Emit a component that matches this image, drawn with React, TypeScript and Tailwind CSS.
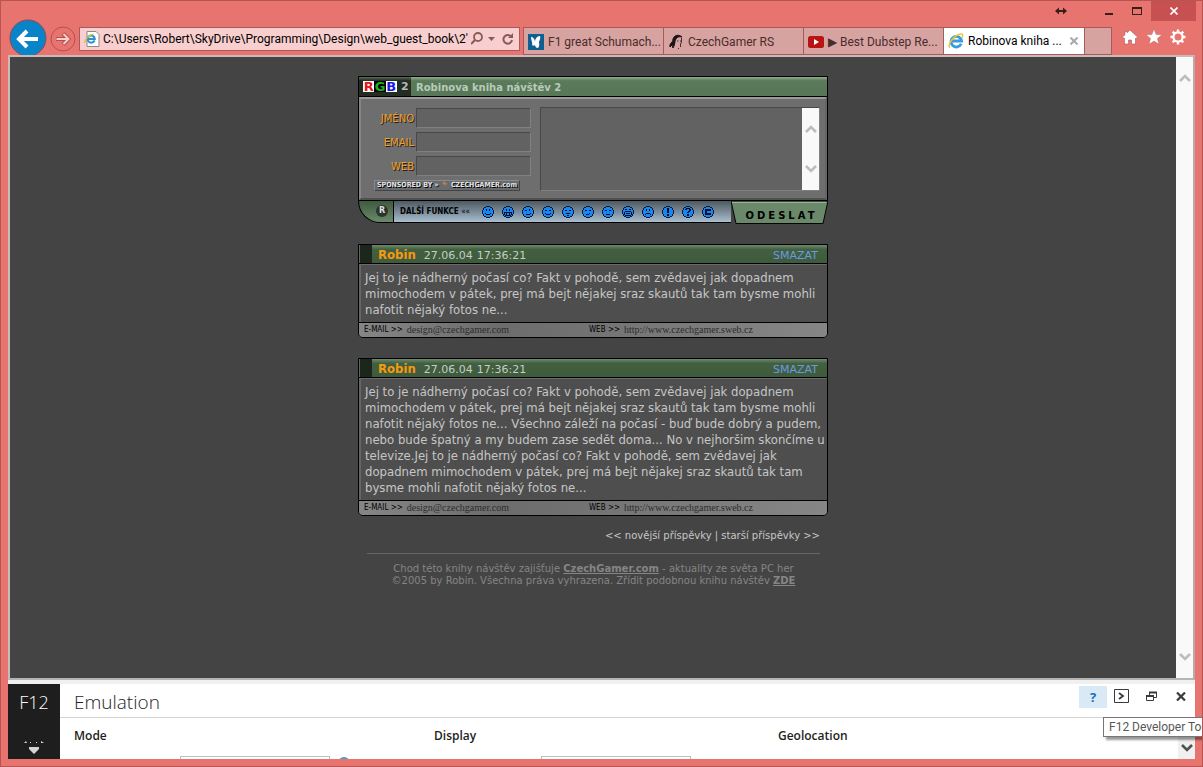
import type { ReactNode } from "react";

type Post = {
  id: number;
  author: string;
  date: string;
  time: string;
  lines: string[];
  email: string;
  web: string;
};

const posts: Post[] = [
  {
    id: 1,
    author: "Robin",
    date: "27.06.04",
    time: "17:36:21",
    lines: [
      "Jej to je nádherný počasí co? Fakt v pohodě, sem zvědavej jak dopadnem",
      "mimochodem v pátek, prej má bejt nějakej sraz skautů tak tam bysme mohli",
      "nafotit nějaký fotos ne...",
    ],
    email: "design@czechgamer.com",
    web: "http://www.czechgamer.sweb.cz",
  },
  {
    id: 2,
    author: "Robin",
    date: "27.06.04",
    time: "17:36:21",
    lines: [
      "Jej to je nádherný počasí co? Fakt v pohodě, sem zvědavej jak dopadnem",
      "mimochodem v pátek, prej má bejt nějakej sraz skautů tak tam bysme mohli",
      "nafotit nějaký fotos ne... Všechno záleží na počasí - buď bude dobrý a pudem,",
      "nebo bude špatný a my budem zase sedět doma... No v nejhoršim skončíme u",
      "televize.Jej to je nádherný počasí co? Fakt v pohodě, sem zvědavej jak",
      "dopadnem mimochodem v pátek, prej má bejt nějakej sraz skautů tak tam",
      "bysme mohli nafotit nějaký fotos ne...",
    ],
    email: "design@czechgamer.com",
    web: "http://www.czechgamer.sweb.cz",
  },
];

const fields = [
  { id: "jmeno", label: "JMÉNO" },
  { id: "email", label: "EMAIL" },
  { id: "web", label: "WEB" },
];

const eyes = "M4 3h1v2H4zM7 3h1v2H7z";

const smileys = [
  { name: "úsměv", d: `${eyes}M3 7h1v1H3zM8 7h1v1H8zM4 8h4v1H4z` },
  { name: "smích", d: `${eyes}M2 6h8v1H2zM2 7h1v2H2zM4 7h1v2H4zM7 7h1v2H7zM9 7h1v2H9zM3 9h6v1H3z` },
  { name: "mrknutí", d: "M3 4h2v1H3zM7 3h1v2H7zM8 7h1v1H8zM4 8h4v1H4z" },
  { name: "spokojený", d: "M3 4h2v1H3zM7 4h2v1H7zM3 7h1v1H3zM8 7h1v1H8zM4 8h4v1H4z" },
  { name: "údiv", d: "M3 4h2v1H3zM7 4h2v1H7zM4 7h4v1H4zM5 9h2v1H5z" },
  { name: "úšklebek", d: "M3 4h2v1H3zM7 4h2v1H7zM4 8h3v1H4zM7 7h1v1H7z" },
  { name: "vážný", d: "M3 4h2v1H3zM7 4h2v1H7zM4 8h4v1H4z" },
  { name: "křik", d: "M3 3h2v1H3zM7 3h2v1H7zM3 5h6v1H3zM2 6h1v3H2zM9 6h1v3H9zM4 7h4v1H4zM3 9h6v1H3z" },
  { name: "smutek", d: `${eyes}M4 7h4v1H4zM3 8h1v1H3zM8 8h1v1H8z` },
  { name: "vykřičník", d: "M5 2h2v5H5zM5 8h2v2H5z" },
  { name: "otazník", d: "M4 2h4v1H4zM3 3h2v1H3zM7 3h2v2H7zM6 5h2v1H6zM5 6h2v1H5zM5 8h2v2H5z" },
  { name: "copyright", d: "M3 3h6v2H5v2h4v2H3z" },
];

function Chevron({ up = false, className }: { up?: boolean; className: string }) {
  return (
    <svg viewBox="0 0 12 8" className={className} fill="none" stroke="currentColor" strokeWidth="2.6">
      <path d={up ? "M1 7l5-5 5 5" : "M1 1l5 5 5-5"} />
    </svg>
  );
}

function IeLogo({ className }: { className: string }) {
  return (
    <svg viewBox="0 0 16 16" className={className} fill="none">
      <path d="M13.2 10.8A5.3 5.3 0 1 1 13.6 8H4.5" stroke="#3a9ddb" strokeWidth="2.8" />
      <path d="M2 14.6C-1 12 5 3.5 11 1.4c3.5-1.2 4.3.6 3.2 3" stroke="#f1c232" strokeWidth="1.5" />
    </svg>
  );
}

function TitleBar() {
  return (
    <div className="flex h-5 shrink-0 justify-end text-[#3a1c1c]">
      <svg viewBox="0 0 12 8" className="mt-1.5 mr-7 h-2 w-3" fill="currentColor">
        <path d="M0 4l4-3.5v2.5h4V.5L12 4 8 7.5V5H4v2.5z" />
      </svg>
      <button aria-label="Minimalizovat" className="flex w-7 justify-center pt-3">
        <span className="h-0.5 w-2 bg-[#3a1c1c]" />
      </button>
      <button aria-label="Maximalizovat" className="flex w-7 justify-center pt-1.5">
        <span className="h-2 w-2.5 border border-t-2 border-[#3a1c1c]" />
      </button>
      <button aria-label="Zavřít" className="mr-1.5 flex w-[45px] items-center justify-center bg-[#c75050] text-white">
        <svg viewBox="0 0 8 8" className="h-2 w-2" stroke="currentColor" strokeWidth="1.6">
          <path d="M.5.5l7 7M7.5.5l-7 7" />
        </svg>
      </button>
    </div>
  );
}

function Tab({ icon, children }: { icon: ReactNode; children: ReactNode }) {
  return (
    <button className="flex h-7 w-[140px] items-center gap-1 border-r border-[#a85a5a] pl-1 text-left text-[#4a2b2b]">
      {icon}
      <span className="whitespace-nowrap">{children}</span>
    </button>
  );
}

function NavBar() {
  return (
    <div className="flex h-[34px] shrink-0 items-start font-['Roboto',sans-serif] text-[12px] leading-4">
      <button aria-label="Zpět" className="-mt-0.5 ml-2 shrink-0">
        <svg viewBox="0 0 38 38" className="h-[38px] w-[38px]" fill="none">
          <circle cx="19" cy="19" r="18" fill="#0a84c8" stroke="#8a4a55" />
          <path d="M29 20H11M18 12l-8 8 8 8" stroke="#fff" strokeWidth="4" />
        </svg>
      </button>
      <button aria-label="Vpřed" className="mt-1 ml-[3px] shrink-0">
        <svg viewBox="0 0 26 28" className="h-7 w-[26px]" fill="none">
          <circle cx="13" cy="14" r="12" stroke="#b94f4d" />
          <path d="M6 14h12M13 8.5l5.5 5.5-5.5 5.5" stroke="#b94f4d" strokeWidth="4" />
          <path d="M6.5 14h11M13.5 9l5 5-5 5" stroke="#f6cfcd" strokeWidth="2" />
        </svg>
      </button>
      <div className="mt-1.5 ml-[3px] flex h-6 min-w-0 flex-1 items-center border border-[#a85a5a] bg-[#f8cfce] pl-1">
        <svg viewBox="0 0 16 16" className="h-4 w-4 shrink-0" fill="none">
          <path d="M3 .5h9l3 3v12H3z" fill="#fff" stroke="#8a8a8a" />
          <path d="M10.5 9.5A3.6 3.6 0 1 1 10.8 8H4" stroke="#2f8fd0" strokeWidth="2" />
          <path d="M1 12C0 9.5 5 4 9.5 3.2" stroke="#d9c22e" strokeWidth="1.2" />
        </svg>
        <input
          aria-label="Adresa"
          defaultValue={"C:\\Users\\Robert\\SkyDrive\\Programming\\Design\\web_guest_book\\2'"}
          className="ml-[3px] min-w-0 flex-1 bg-transparent text-black outline-none"
        />
        <svg viewBox="3 0 44 14" className="mr-1 h-3.5 w-11 shrink-0 text-[#8a5a5a]" fill="none" stroke="currentColor">
          <circle cx="10" cy="5" r="4" strokeWidth="1.8" />
          <path d="M7 8l-4 4" strokeWidth="2.2" />
          <path d="M20 5h7l-3.5 4z" fill="currentColor" stroke="none" />
          <path d="M43 4.5A4.3 4.3 0 1 0 44 8" strokeWidth="2" />
          <path d="M45 1v5h-5z" fill="currentColor" stroke="none" />
        </svg>
      </div>
      <div className="mt-1.5 ml-[3px] flex h-7 border border-r-0 border-[#a85a5a] bg-[#d6a3a1]">
        <Tab
          icon={
            <svg viewBox="0 0 16 16" className="h-4 w-4 shrink-0">
              <path d="M0 0h16v16H0z" fill="#0f5f93" />
              <path d="M3 3c2 0 4 2 4 5 0-3 2-6 5-6 1 3-1 5-1 6s1 4-1 6c-2 0-3-2-3-3-1 1-2 1-3 0 1-2-1-5-1-8z" fill="#fff" />
            </svg>
          }
        >
          F1 great Schumach...
        </Tab>
        <Tab
          icon={
            <svg viewBox="0 0 16 16" className="h-4 w-4 shrink-0" fill="none" stroke="#1c1313">
              <path d="M2 13c-1-4 3-4 3-8 1-4 6-5 9-2-4-1-6 1-7 4 0 3-1 5-2 7-1-1 0-3 0-4-1 1-2 2-3 3z" fill="#1c1313" />
              <path d="M13.5 4v4l-1 2v3M9 7h1.5M12 7h1M10 14l1 1" strokeWidth=".8" />
            </svg>
          }
        >
          CzechGamer RS
        </Tab>
        <Tab
          icon={
            <svg viewBox="0 0 16 16" className="h-4 w-4 shrink-0">
              <rect y="2" width="16" height="12" rx="2.5" fill="#b81414" />
              <path d="M6 5l5 3-5 3z" fill="#fff" />
            </svg>
          }
        >
          ▶ Best Dubstep Re...
        </Tab>
        <div className="flex w-[141px] items-center border-r border-[#a85a5a] bg-white pl-1 text-black">
          <IeLogo className="h-4 w-4 shrink-0" />
          <span className="ml-1 flex-1 whitespace-nowrap">Robinova kniha ...</span>
          <button aria-label="Zavřít kartu" className="mr-1.5 shrink-0 text-[#a8a8a8]">
            <svg viewBox="0 0 8 8" className="h-2 w-2" stroke="currentColor" strokeWidth="2">
              <path d="M.5.5l7 7M7.5.5l-7 7" />
            </svg>
          </button>
        </div>
        <button aria-label="Nová karta" className="w-[27px] border-r border-[#a85a5a]" />
      </div>
      <div className="mt-2 mr-4 ml-2.5 flex shrink-0 gap-2 text-white">
        <button aria-label="Domů">
          <svg viewBox="0 0 16 16" className="h-4 w-4" fill="currentColor" stroke="#a85a5a" strokeWidth=".6">
            <path d="M8 1l7.5 7-1.5 1.5-.5-.5v6H9.5v-4h-3v4H2.5V9l-.5.5L.5 8 3 5.7V2.5h2v1.3z" />
          </svg>
        </button>
        <button aria-label="Oblíbené">
          <svg viewBox="0 0 16 16" className="h-4 w-4" fill="currentColor" stroke="#a85a5a" strokeWidth=".4">
            <path d="M8 0l2.100 5.600 5.900.2-4.600 3.700 1.600 5.800L8 12l-5 3.300 1.600-5.800L0 5.800l5.900-.2z" />
          </svg>
        </button>
        <button aria-label="Nástroje">
          <svg viewBox="0 0 16 16" className="h-4 w-4" fill="none" stroke="currentColor">
            <circle cx="8" cy="8" r="4.6" strokeWidth="2.2" />
            <path d="M8 .5v2.5M8 13v2.5M.5 8H3M13 8h2.5M2.7 2.7l1.8 1.8M11.5 11.5l1.8 1.8M2.7 13.3l1.8-1.8M11.5 4.5l1.8-1.8" strokeWidth="2.4" />
          </svg>
        </button>
      </div>
    </div>
  );
}

function GuestForm() {
  return (
    <form onSubmit={(e) => e.preventDefault()} className="w-full">
      <div className="border border-black">
        <div className="flex h-5 border-b border-black bg-gradient-to-b from-[#8fae8f] via-[#5a7a5a] via-20% to-[#587658]">
          <div className="flex w-[52px] items-center gap-1 bg-gradient-to-b from-[#5b6b5b] via-[#222c22] via-20% to-[#222c22] pl-1 font-['DejaVu_Sans',sans-serif] text-[11px] leading-3 font-bold text-[#b8b8b8]">
            <span className="flex h-[11px] w-[34px] text-center text-[13px] leading-[11px]">
              <span className="flex-1 bg-white text-[#e01818]">R</span>
              <span className="flex-1 bg-black text-[#20b020]">G</span>
              <span className="flex-1 bg-white text-[#1818e0]">B</span>
            </span>
            2
          </div>
          <h1 className="pt-px pl-[5px] font-['DejaVu_Sans',sans-serif] text-[10px] leading-5 font-bold text-[#b9cbb9]">
            Robinova kniha návštěv 2
          </h1>
        </div>
        <div className="flex border-2 border-t-[#9a9a9a] border-r-[#666] border-b-[#505050] border-l-[#858585] bg-[#6e6e6e] pr-[5px] pb-[7px]">
          <div className="flex w-[179px] shrink-0 flex-col items-end gap-1 pt-[9px] pr-[9px]">
            {fields.map((f) => (
              <div key={f.id} className="flex items-center gap-0.5">
                <label
                  htmlFor={f.id}
                  className="pt-0.5 font-['DejaVu_Sans',sans-serif] text-[10px] leading-[18px] text-[#f0a030] [text-shadow:1px_1px_0_#2a1c08]"
                >
                  {f.label}
                </label>
                <input
                  id={f.id}
                  className="h-5 w-[115px] border border-t-[#484848] border-r-[#808080] border-b-[#808080] border-l-[#484848] bg-[#626262] px-1 text-[11px] text-neutral-200 outline-none"
                />
              </div>
            ))}
            <a
              href="#czechgamer"
              className="mr-[11px] flex h-[11px] w-[146px] items-center justify-between border border-t-[#8a8a8a] border-r-[#444] border-b-[#444] border-l-[#8a8a8a] bg-[#666b70] px-0.5 font-['DejaVu_Sans_Condensed','DejaVu_Sans',sans-serif] text-[7px] leading-[9px] font-bold whitespace-nowrap text-[#e4e4e4] [text-shadow:1px_1px_0_#000]"
            >
              <span>SPONSORED BY »</span>
              <svg viewBox="0 0 6 6" className="mb-1 h-1.5 w-1.5" fill="#c87a40">
                <path d="M0 2l3-2v1.5L6 3 3 3.5 4 6 2 3.5z" />
              </svg>
              <span>CZECHGAMER.com</span>
            </a>
          </div>
          <div className="mt-2 flex h-[84px] min-w-0 flex-1 border border-t-[#484848] border-r-[#808080] border-b-[#808080] border-l-[#484848] bg-[#626262]">
            <textarea
              aria-label="Zpráva"
              className="min-w-0 flex-1 resize-none overflow-hidden bg-transparent p-1 text-[12px] text-neutral-200 outline-none"
            />
            <div className="flex w-[17px] flex-col items-center justify-between bg-[#f9f9f9] py-[17px] text-[#bdbdbd]">
              <Chevron up className="h-2 w-3" />
              <Chevron className="h-2 w-3" />
            </div>
          </div>
        </div>
      </div>
      <div className="flex h-[23px]">
        <div className="flex h-[22px] w-9 shrink-0 justify-end rounded-bl-[28px] border border-t-0 border-black bg-gradient-to-b from-[#3f5a3f] to-[#6b8a6b] pt-1 pr-[5px]">
          <span className="flex h-3 w-3 items-center justify-center rounded-full bg-[#2c352c] font-['DejaVu_Sans',sans-serif] text-[8px] leading-3 font-bold text-[#dcdcdc]">
            R
          </span>
        </div>
        <div className="flex h-[22px] min-w-0 flex-1 items-center border-b border-black bg-gradient-to-b from-[#4e5a62] to-[#a9bfd0] pl-1.5">
          <span className="w-[82px] font-['DejaVu_Sans_Condensed','DejaVu_Sans',sans-serif] text-[8px] font-bold whitespace-nowrap text-black">
            DALŠÍ FUNKCE <span className="font-normal">««</span>
          </span>
          <div className="flex gap-2">
            {smileys.map((s) => (
              <button key={s.name} type="button" aria-label={s.name} className="h-3 w-3 shrink-0">
                <svg viewBox="0 0 12 12" className="h-3 w-3" shapeRendering="crispEdges">
                  <path d="M4 0h4v1h2v1h1v2h1v4h-1v2h-1v1H8v1H4v-1H2v-1H1V8H0V4h1V2h1V1h2z" fill="#061a3c" />
                  <path d="M4 1h4v1h2v2h1v4h-1v2H8v1H4v-1H2V8H1V4h1V2h2z" fill="#1a86f0" />
                  <path d={s.d} fill="#03102a" />
                </svg>
              </button>
            ))}
          </div>
        </div>
        <div className="h-[22px] w-[97px] shrink-0">
          <button type="submit" className="relative h-[23px] w-full">
            <svg viewBox="0 0 97 24" preserveAspectRatio="none" className="absolute inset-0 h-full w-full">
              <path d="M0 0h97l-5 23.5H5z" fill="#6a886a" stroke="#000" />
              <path d="M1 1.5h94" stroke="#9db89d" />
            </svg>
            <span className="relative pl-1 font-['DejaVu_Sans',sans-serif] text-[10px] leading-[22px] font-bold tracking-[3px] text-black">
              ODESLAT
            </span>
          </button>
        </div>
      </div>
    </form>
  );
}

function GuestPost({ post }: { post: Post }) {
  return (
    <article className="mt-5 w-full overflow-hidden rounded-b-[5px] border border-black bg-[#4e4e4e]">
      <header className="flex h-[19px] items-center border-b border-black bg-gradient-to-b from-[#6f8a6f] via-[#42603f] via-25% to-[#3f5a3d] font-['DejaVu_Sans',sans-serif] text-[11px] leading-4">
        <span className="h-full w-[13px] border-l border-[#5a6a5a] bg-[#1c261c]" />
        <b className="ml-1.5 pt-0.5 font-['DejaVu_Sans_Condensed','DejaVu_Sans',sans-serif] text-[13px] text-[#f59a10]">
          {post.author}
        </b>
        <time className="ml-2 flex gap-1 pt-1 text-[#c4cec4]">
          <span>{post.date}</span>
          <span>{post.time}</span>
        </time>
        <a href="#smazat" className="mr-[9px] ml-auto pt-[3px] text-[#6a9ae0]">
          SMAZAT
        </a>
      </header>
      <div className="border-t border-l-2 border-t-[#6a6a6a] border-l-[#666] pt-[5px] pb-1 pl-1 font-['DejaVu_Sans_Condensed','DejaVu_Sans',sans-serif] text-[13px] leading-4 text-[#c6c6c6]">
        {post.lines.map((line) => (
          <p key={line} className="whitespace-nowrap">
            {line}
          </p>
        ))}
      </div>
      <footer className="flex h-[15px] items-center border-t border-black bg-gradient-to-r from-[#868686] via-[#6c6c6c] via-30% to-[#868686] pl-[5px] font-['DejaVu_Sans_Condensed','DejaVu_Sans',sans-serif] text-[8px] leading-[14px] text-black">
        <span className="flex w-[225px] gap-1 whitespace-nowrap">
          E-MAIL &gt;&gt;
          <a href="#mail" className="font-['Liberation_Serif',serif] text-[10px] text-[#2c2c2c]">
            {post.email}
          </a>
        </span>
        <span className="flex gap-1 whitespace-nowrap">
          WEB &gt;&gt;
          <a href="#web" className="font-['Liberation_Serif',serif] text-[10px] text-[#2c2c2c]">
            {post.web}
          </a>
        </span>
      </footer>
    </article>
  );
}

function GuestBook() {
  return (
    <main className="flex min-w-0 flex-1 flex-col items-center overflow-hidden bg-[#444] pt-[19px]">
      <div className="w-full max-w-[470px]">
        <GuestForm />
        {posts.map((p) => (
          <GuestPost key={p.id} post={p} />
        ))}
        <div className="mr-2 ml-[9px] font-['DejaVu_Sans',sans-serif] text-[10px] leading-3">
          <nav className="border-b border-[#666] pt-3.5 pb-[11px] text-right text-[#c6c6c6]">
            <a href="#novejsi">&lt;&lt; novější příspěvky</a> | <a href="#starsi">starší příspěvky &gt;&gt;</a>
          </nav>
          <p className="pt-[9px] text-center whitespace-nowrap text-[#858585]">
            Chod této knihy návštěv zajišťuje{" "}
            <a href="#cg" className="font-bold underline">
              CzechGamer.com
            </a>{" "}
            - aktuality ze světa PC her
            <br />
            ©2005 by Robin. Všechna práva vyhrazena. Zřídit podobnou knihu návštěv{" "}
            <a href="#zde" className="font-bold underline">
              ZDE
            </a>
          </p>
        </div>
      </div>
    </main>
  );
}

function DevTools() {
  return (
    <section className="relative flex h-[75px] shrink-0 bg-white font-['Open_Sans',sans-serif] text-[#1e1e1e]">
      <div className="flex w-[52px] shrink-0 flex-col items-center justify-between bg-[#1e1e1e] pt-1.5 pb-1 text-[18px] leading-6 font-light text-white">
        F12
        <svg viewBox="0 0 22 16" className="h-4 w-[22px]" fill="#d4d4d4">
          <path d="M1 4l2-2 1 2zM7 3h1v1H7zM13 3h1v1h-1zM18 2l3 2h-3zM6 8h10v2l-5 5-5-5z" />
        </svg>
      </div>
      <div className="flex min-w-0 flex-1 flex-col">
        <div className="flex h-[34px] shrink-0 items-center border-b border-[#d4d4d4] pl-3.5">
          <h2 className="flex-1 pt-0.5 text-[19px] leading-6 font-light">Emulation</h2>
          <div className="mb-2 flex items-center text-[#3a3a3a]">
            <button className="h-[22px] w-7 bg-[#d9eaf6] text-[13px] leading-5 font-bold text-[#1c6fc0]">?</button>
            <button aria-label="Konzole" className="flex w-[29px] justify-center">
              <svg viewBox="0 0 15 15" className="h-[15px] w-[15px]" fill="none" stroke="currentColor">
                <path d="M.5.5h14v13H.5z" />
                <path d="M5 4l4 3-4 3" strokeWidth="1.8" />
              </svg>
            </button>
            <button aria-label="Odepnout" className="flex w-[30px] justify-center">
              <svg viewBox="0 0 11 11" className="h-[11px] w-[11px]" fill="none" stroke="currentColor">
                <path d="M.5 4.5h7v5h-7zM3.5 4V1.5h7v5H8" />
                <path d="M0 5h8M3 1.5h8" strokeWidth="2" />
              </svg>
            </button>
            <button aria-label="Zavřít nástroje" className="flex w-[29px] justify-center">
              <svg viewBox="0 0 10 9" className="h-[9px] w-2.5" stroke="currentColor" strokeWidth="2.2">
                <path d="M1 .5l8 8M9 .5l-8 8" />
              </svg>
            </button>
          </div>
        </div>
        <div className="flex min-h-0 flex-1 overflow-hidden">
          <div className="grid flex-1 grid-cols-[360fr_344fr_400fr] pt-2 pl-3.5 text-[12px] leading-5 font-semibold">
            <div>
              <h3>Mode</h3>
              <div className="mt-2.5 ml-[106px] flex items-start gap-2">
                <select aria-label="Mode" className="h-5 w-[150px] appearance-none border border-[#b4c4c4]" />
                <span className="mt-px h-3 w-3 rounded-full bg-[#4a9acb]" />
              </div>
            </div>
            <div>
              <h3>Display</h3>
              <select aria-label="Display" className="mt-2.5 ml-[107px] block h-5 w-[150px] appearance-none border border-[#b4c4c4]" />
            </div>
            <h3>Geolocation</h3>
          </div>
          <div className="mt-4 flex w-[17px] shrink-0 justify-center bg-[#f0f0f0] pt-2.5 text-[#505050]">
            <Chevron className="h-2 w-3" />
          </div>
        </div>
      </div>
      <div
        role="tooltip"
        className="absolute top-[33px] left-[calc(100%-92px)] border border-[#767676] bg-white px-[5px] font-['Roboto',sans-serif] text-[12px] leading-[18px] whitespace-nowrap text-[#575757] shadow-[3px_3px_2px_rgba(0,0,0,0.4)]"
      >
        F12 Developer Tools
      </div>
    </section>
  );
}

export default function App() {
  return (
    <div className="flex h-screen flex-col overflow-hidden border border-[#b85552] bg-[#e8746f]">
      <TitleBar />
      <NavBar />
      <div className="mx-[7px] mb-[7px] flex min-h-0 flex-1 flex-col">
        <div className="relative flex min-h-0 flex-1 border-2 border-t-[#cbb9b8] border-r-[#b8a9a8] border-b-[#b4b4b4] border-l-[#c8bcbb]">
          <GuestBook />
          <div className="flex w-[17px] shrink-0 flex-col items-center justify-between bg-[#f9f9f9] py-[17px] text-[#bdbdbd]">
            <Chevron up className="h-2 w-3" />
            <Chevron className="h-2 w-3" />
          </div>
        </div>
        <div className="h-1 shrink-0 bg-[#f0f0f0]" />
        <DevTools />
      </div>
    </div>
  );
}
